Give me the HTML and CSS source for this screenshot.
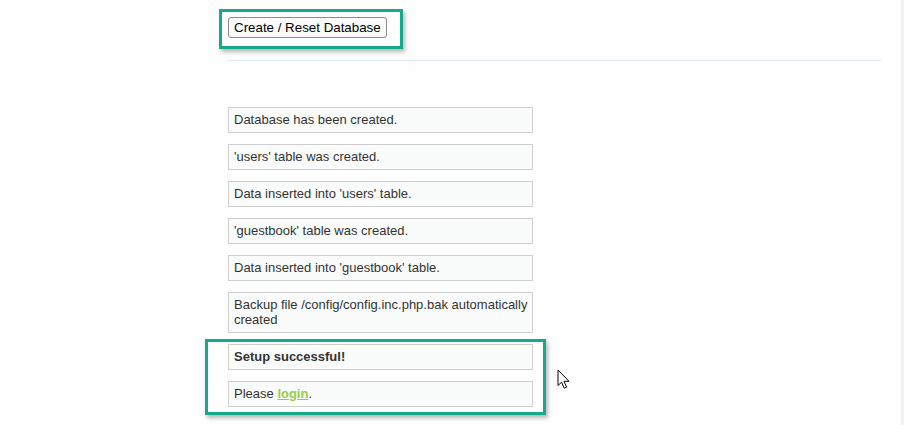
FILE: index.html
```html
<!DOCTYPE html>
<html lang="en">
<head>
<meta charset="utf-8">
<title>Setup</title>
<link rel="stylesheet" href="styles.css">
</head>
<body>
<div class="page">
  <div class="sidebar"></div>
  <div class="main">
    <button class="btn" type="button">Create / Reset Database</button>
    <div class="rule"></div>
    <div class="messages">
      <div class="message">Database has been created.</div>
      <div class="message">'users' table was created.</div>
      <div class="message">Data inserted into 'users' table.</div>
      <div class="message">'guestbook' table was created.</div>
      <div class="message">Data inserted into 'guestbook' table.</div>
      <div class="message">Backup file /config/config.inc.php.bak automatically created</div>
      <div class="message"><strong>Setup successful!</strong></div>
      <div class="message">Please <a class="login" href="#">login</a>.</div>
    </div>
  </div>
  <div class="edge"></div>
</div>
<div class="highlight highlight-button"></div>
<div class="highlight highlight-success"></div>
<svg class="cursor" width="14" height="21" viewBox="0 0 14 21" aria-hidden="true">
  <path d="M1 1 L1 16.5 L4.6 13.2 L7.2 19.2 L9.6 18.2 L7 12.3 L12 12.3 Z" fill="#fff" stroke="#000" stroke-width="1" stroke-linejoin="round"/>
</svg>
</body>
</html>
```
FILE: styles.css
```css
html, body {
  margin: 0;
  padding: 0;
  background: #fefefe;
  height: 100%;
  overflow: hidden;
}
body {
  position: relative;
  font-family: "Liberation Sans", Arial, sans-serif;
  font-size: 13px;
  color: #333;
}
.page {
  display: flex;
  height: 100%;
}
.sidebar {
  width: 228px;
  flex: none;
}
.main {
  width: 653px;
  flex: none;
  padding-top: 17px;
}
.edge {
  margin-left: auto;
  width: 3px;
  background: #f2f2f2;
}
.btn {
  display: block;
  box-sizing: border-box;
  height: 21px;
  padding: 0 5px;
  white-space: nowrap;
  font-family: "Liberation Sans", Arial, sans-serif;
  font-size: 13.33px;
  line-height: 19px;
  color: #000;
  background: #fbfbfb;
  border: 1px solid #8a8a8a;
  border-radius: 3px;
}
.rule {
  margin-top: 22px;
  height: 1px;
  background: #dfe9f3;
}
.messages {
  margin-top: 46px;
  width: 305px;
  display: flex;
  flex-direction: column;
  gap: 11px;
}
.message {
  box-sizing: border-box;
  border: 1px solid #cfcfcf;
  background: #f9fcfb;
  padding: 4px 0 5px 5px;
  line-height: 15px;
}
.message strong {
  font-weight: bold;
}
.login {
  color: #9acd45;
  font-weight: bold;
  text-decoration: underline;
}
.highlight {
  position: absolute;
  border: 3px solid #16a98a;
  box-shadow: 2px 3px 4px rgba(0, 0, 0, 0.28);
}
.highlight-button {
  left: 219px;
  top: 9px;
  width: 178px;
  height: 34px;
}
.highlight-success {
  left: 205px;
  top: 339px;
  width: 335px;
  height: 70px;
}
.cursor {
  position: absolute;
  left: 557px;
  top: 369px;
}
```
